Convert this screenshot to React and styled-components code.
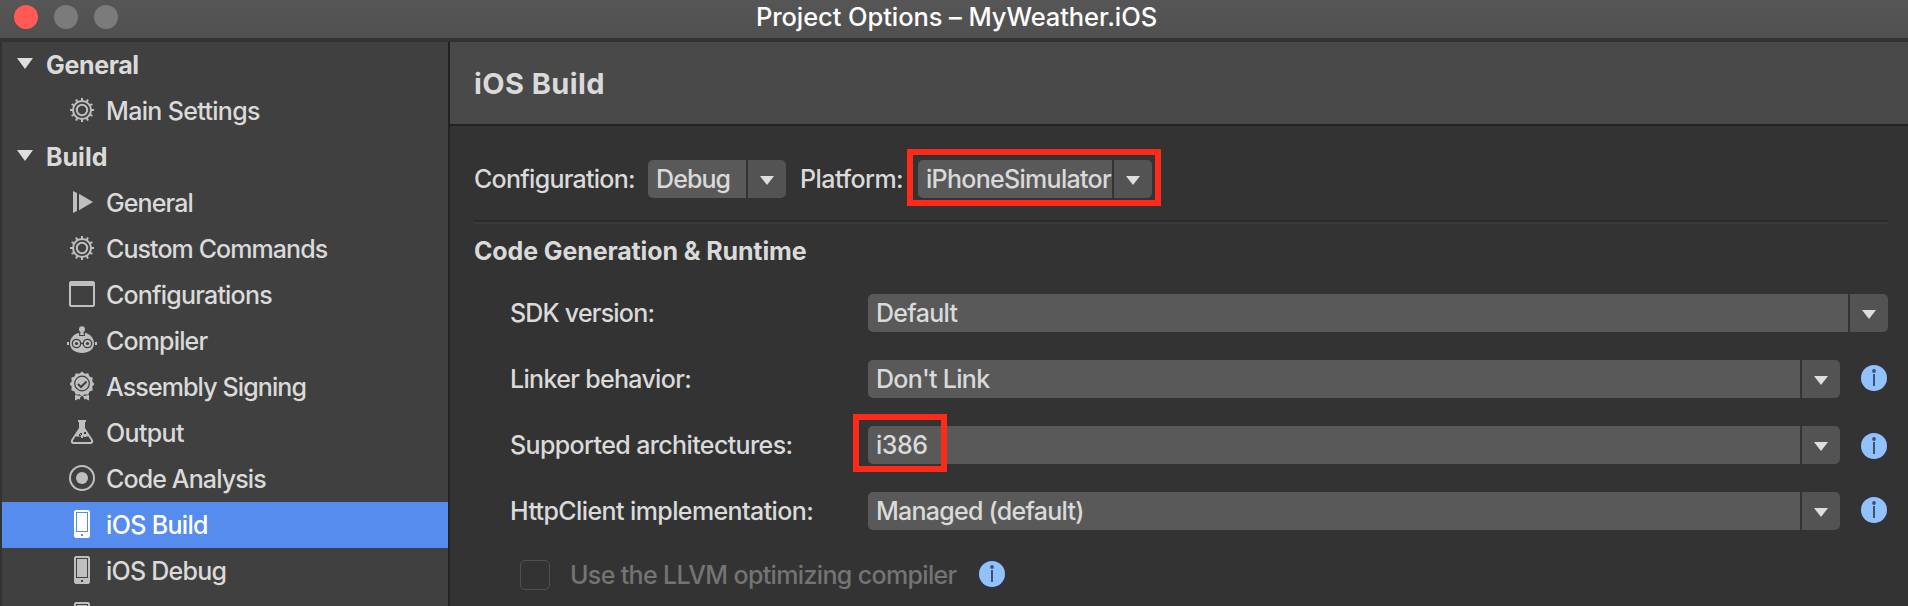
import React from "react";
import styled, { createGlobalStyle, css } from "styled-components";

const GlobalStyle = createGlobalStyle`
  * { box-sizing: border-box; }
  body {
    margin: 0;
    overflow: hidden;
    background: #333333;
    color: #dadada;
    font-family: Inter, "Liberation Sans", sans-serif;
    font-size: 25px;
    font-weight: 450;
  }
`;

const Window = styled.div`
  height: 606px;
  display: flex;
  flex-direction: column;
  overflow: hidden;
`;

const TitleBar = styled.header`
  flex: none;
  height: 42px;
  display: grid;
  grid-template-columns: 1fr auto 1fr;
  align-items: center;
  padding: 0 14px 6px;
  background: linear-gradient(#565656, #505050);
  border-bottom: 4px solid #323232;
`;

const Lights = styled.div`
  display: flex;
  gap: 16px;
`;

const Light = styled.span`
  width: 24px;
  height: 24px;
  border-radius: 50%;
  background: ${(p) => p.$color};
`;

const Title = styled.h1`
  margin: 0;
  font-size: 25.5px;
  font-weight: 450;
  line-height: 32px;
  letter-spacing: -0.08px;
  padding: 1px 0 0 5px;
  color: #ffffff;
`;

const Body = styled.div`
  flex: 1;
  min-height: 0;
  display: flex;
`;

const Sidebar = styled.nav`
  flex: none;
  width: 450px;
  overflow: hidden;
  background: #404040;
  border-left: 2px solid #333333;
  border-right: 2px solid #222222;
`;

const Group = styled.div`
  height: 46px;
  display: flex;
  align-items: center;
  gap: 13px;
  padding-left: 15px;
  font-weight: 700;
  letter-spacing: ${(p) => p.$tracking}px;

  svg { margin-bottom: 3px; }
`;

const Item = styled.div`
  height: 46px;
  display: flex;
  align-items: center;
  gap: 9px;
  padding-left: 65px;
  letter-spacing: ${(p) => p.$tracking}px;
  ${(p) => p.$selected && css`
    background: #568ced;
    color: #ffffff;
  `}

  svg {
    flex: none;
    margin-bottom: 2px;
    color: ${(p) => (p.$selected ? "#ffffff" : "#bfbfbf")};
  }
`;

const Panel = styled.main`
  flex: 1;
  min-width: 0;
  display: flex;
  flex-direction: column;
`;

const PanelHeader = styled.div`
  flex: none;
  height: 84px;
  display: flex;
  align-items: center;
  padding-left: 24px;
  background: #494949;
  border-bottom: 2px solid #222222;
  font-size: 29px;
  font-weight: 700;
  letter-spacing: 0.4px;
`;

const Content = styled.div`
  padding: 34px 20px 0 24px;
`;

const Toolbar = styled.div`
  height: 60px;
  display: flex;
  align-items: flex-start;
`;

const ToolLabel = styled.label`
  width: ${(p) => p.$width}px;
  margin-left: ${(p) => p.$left || 0}px;
  line-height: 38px;
  white-space: nowrap;
  letter-spacing: ${(p) => p.$tracking}px;
`;

const Divider = styled.div`
  height: 4px;
  background: #3a3a3a;
  border-top: 2px solid #2a2a2a;
`;

const SectionTitle = styled.h2`
  margin: 0;
  height: 70px;
  padding-top: 12px;
  font-size: 25px;
  line-height: 30px;
  font-weight: 700;
  letter-spacing: -0.12px;
`;

const Rows = styled.div`
  display: flex;
  flex-direction: column;
  gap: 28px;
`;

const Row = styled.div`
  height: 38px;
  display: flex;
  align-items: center;
  padding-left: 36px;
`;

const RowLabel = styled.label`
  flex: none;
  width: 358px;
  line-height: 38px;
  white-space: nowrap;
  letter-spacing: ${(p) => p.$tracking}px;
`;

const Select = styled.div`
  position: relative;
  height: 38px;
  display: flex;
  gap: 2px;
  ${(p) => (p.$width ? css`flex: none; width: ${p.$width}px;` : css`flex: 1;`)}
`;

const Field = styled.div`
  flex: 1;
  min-width: 0;
  padding-left: 8px;
  line-height: 38px;
  white-space: nowrap;
  border-radius: 5px 0 0 5px;
  background: #595959;
  letter-spacing: ${(p) => p.$tracking}px;
`;

const ArrowButton = styled.div`
  flex: none;
  width: 38px;
  display: flex;
  align-items: center;
  justify-content: center;
  padding-top: 3px;
  border-radius: 0 5px 5px 0;
  background: #535353;
`;

const Callout = styled.div`
  position: absolute;
  top: ${(p) => p.$top}px;
  left: ${(p) => p.$left}px;
  width: ${(p) => p.$width}px;
  height: ${(p) => p.$height}px;
  border: 6px solid #ff2a1a;
`;

const InfoSlot = styled.span`
  flex: none;
  display: flex;
  margin: 0 1px 0 21px;
  padding-top: ${(p) => Math.max(p.$shift, 0) * 2}px;
  padding-bottom: ${(p) => Math.max(-p.$shift, 0) * 2}px;
`;

const CheckRow = styled.div`
  height: 30px;
  display: flex;
  align-items: center;
  margin-top: 30px;
  padding-left: 46px;
  color: #747474;
`;

const CheckLabel = styled.span`
  width: 388px;
  white-space: nowrap;
  letter-spacing: -0.65px;
`;

const Checkbox = styled.span`
  width: 30px;
  height: 30px;
  margin-right: 20px;
  border: 1.5px solid #505050;
  border-radius: 5px;
`;

const Triangle = ({ w, h }) => (
  <svg width={w} height={h} viewBox="0 0 16 10" preserveAspectRatio="none">
    <path d="M0 0h16L8 10z" fill="#dedede" />
  </svg>
);

const Icon = ({ children }) => (
  <svg width="30" height="30" viewBox="0 0 30 30" fill="none" stroke="none">
    {children}
  </svg>
);

const range = (n) => Array.from({ length: n }, (_, i) => i);

const GearIcon = () => (
  <Icon>
    <g stroke="currentColor" strokeWidth="2">
      <circle cx="15" cy="15" r="9" />
      <circle cx="15" cy="15" r="5.2" />
      {range(12).map((i) => (
        <path key={i} d="M15 3v3" transform={`rotate(${i * 30} 15 15)`} />
      ))}
    </g>
  </Icon>
);

const RunIcon = () => (
  <Icon>
    <path d="M6 4l4 2v18l-4 2zM12 6.8L26 15l-14 8.2z" fill="currentColor" />
  </Icon>
);

const WindowIcon = () => (
  <Icon>
    <path
      fillRule="evenodd"
      fill="currentColor"
      d="M3.5 2h23L28 3.5v23L26.5 28h-23L2 26.5v-23zM4 7v19h22V7z"
    />
  </Icon>
);

const RobotIcon = () => (
  <Icon>
    <path d="M3 18.5C3 12 8.5 7.500 15 7.500S27 12 27 18.500c0 6-5.500 9.500-12 9.500S3 24.500 3 18.500z" fill="currentColor" />
    <path d="M12.7 7v3.500h4.600V7" stroke="#404040" strokeWidth="1.2" />
    <path d="M13.8 5h2.400v5h-2.400z" fill="currentColor" />
    <circle cx="15" cy="4.2" r="3" fill="currentColor" />
    <path d="M0 17h2v3H0zM28 17h2v3h-2z" fill="currentColor" />
    <g stroke="#404040" strokeWidth="1.3">
      <circle cx="9.5" cy="18.5" r="4.2" />
      <circle cx="20.5" cy="18.5" r="4.2" />
      <path d="M13.5 18.500h3" />
    </g>
    <circle cx="9.5" cy="18.5" r="1.6" fill="#404040" />
    <circle cx="20.5" cy="18.5" r="1.6" fill="#404040" />
  </Icon>
);

const sealPoints = range(24)
  .map((i) => {
    const r = i % 2 ? 10.6 : 12.4;
    const a = (i * Math.PI) / 12;
    return `${(15 + r * Math.sin(a)).toFixed(2)},${(13 - r * Math.cos(a)).toFixed(2)}`;
  })
  .join(" ");

const SealIcon = () => (
  <Icon>
    <polygon points={sealPoints} fill="currentColor" />
    <circle cx="15" cy="12.5" r="7.3" stroke="#404040" strokeWidth="1.2" />
    <path d="M11 13l3 3 5.500-5.500" stroke="#404040" strokeWidth="2" />
    <path d="M8 24l6 1-1.500 3.500L11 28l-3 1.500zM22 24l-6 1 1.500 3.500L19 28l3 1.500z" fill="currentColor" />
  </Icon>
);

const FlaskIcon = () => (
  <Icon>
    <path
      fill="currentColor"
      d="M11 3h8v2h-1v6l7.6 11.5c1.3 2.3.3 4.500-2.200 4.500H6.600c-2.500 0-3.500-2.200-2.200-4.500L12 11V5h-1z"
    />
    <path d="M8.5 19.500h13l2.500 4q.5 1.500-1 1.500H7q-1.500 0-1-1.500z" fill="#404040" />
    <path d="M13 16h2v2h-2zM17 15h2v2h-2zM12 19h2v-2h-2z" fill="#404040" />
    <path d="M14 19h2v2h-2zM17 18h2v2h-2z" fill="currentColor" />
  </Icon>
);

const TargetIcon = () => (
  <Icon>
    <circle cx="15" cy="15" r="12" stroke="currentColor" strokeWidth="2" />
    <circle cx="15" cy="15" r="6" fill="currentColor" />
  </Icon>
);

const PhoneIcon = () => (
  <Icon>
    <path
      fillRule="evenodd"
      fill="currentColor"
      d="M8.5 1h13L23 2.500v25L21.500 29h-13L7 27.500v-25zM9 3v20h12V3zM14 25v2h2v-2z"
    />
    <path d="M10 4h10v18H10z" fill="currentColor" />
  </Icon>
);

const InfoIcon = () => (
  <svg width="26" height="26" viewBox="0 0 26 26">
    <circle cx="13" cy="13" r="13" fill="#92c1ff" />
    <circle cx="13" cy="6" r="1.9" fill="#3d5270" />
    <path d="M12 9h2v12h-2z" fill="#3d5270" />
  </svg>
);

const buildItems = [
  ["General", RunIcon, -0.9],
  ["Custom Commands", GearIcon, -0.92],
  ["Configurations", WindowIcon, -0.8],
  ["Compiler", RobotIcon, -0.85],
  ["Assembly Signing", SealIcon, -0.88],
  ["Output", FlaskIcon, -0.65],
  ["Code Analysis", TargetIcon, -0.88],
  ["iOS Build", PhoneIcon, -0.66],
  ["iOS Debug", PhoneIcon, -0.76],
];

const NavItem = ({ item: [label, Glyph, tracking], selected }) => (
  <Item $tracking={tracking} $selected={selected}>
    <Glyph />
    {label}
  </Item>
);

const ComboBox = ({ value, width, tracking = -0.7, children }) => (
  <Select $width={width}>
    <Field $tracking={tracking}>{value}</Field>
    <ArrowButton>
      <Triangle w={14} h={9} />
    </ArrowButton>
    {children}
  </Select>
);

export default function App() {
  return (
    <Window>
      <GlobalStyle />
      <TitleBar>
        <Lights>
          <Light $color="#ff5a55" />
          <Light $color="#7b7b7b" />
          <Light $color="#7b7b7b" />
        </Lights>
        <Title>Project Options – MyWeather.iOS</Title>
      </TitleBar>
      <Body>
        <Sidebar>
          <Group $tracking={-0.35}><Triangle w={16} h={11} />General</Group>
          <NavItem item={["Main Settings", GearIcon, -0.66]} />
          <Group $tracking={0}><Triangle w={16} h={11} />Build</Group>
          {buildItems.map((item) => (
            <NavItem key={item[0]} item={item} selected={item[0] === "iOS Build"} />
          ))}
          <Item>
            <PhoneIcon />
          </Item>
        </Sidebar>
        <Panel>
          <PanelHeader>iOS Build</PanelHeader>
          <Content>
            <Toolbar>
              <ToolLabel $width={174} $tracking={-0.74}>Configuration:</ToolLabel>
              <ComboBox value="Debug" width={138} tracking={-0.9} />
              <ToolLabel $width={118} $left={14} $tracking={-0.55}>Platform:</ToolLabel>
              <ComboBox value="iPhoneSimulator" width={234}>
                <Callout $top={-11} $left={-11} $width={254} $height={57} />
              </ComboBox>
            </Toolbar>
            <Divider />
            <SectionTitle>Code Generation &amp; Runtime</SectionTitle>
            <Rows>
              <Row>
                <RowLabel $tracking={-0.8}>SDK version:</RowLabel>
                <ComboBox value="Default" />
              </Row>
              <Row>
                <RowLabel $tracking={-0.68}>Linker behavior:</RowLabel>
                <ComboBox value="Don't Link" tracking={-0.7} />
                <InfoSlot $shift={-1}><InfoIcon /></InfoSlot>
              </Row>
              <Row>
                <RowLabel $tracking={-0.62}>Supported architectures:</RowLabel>
                <ComboBox value="i386" tracking={-0.5}>
                  <Callout $top={-12} $left={-15} $width={94} $height={58} />
                </ComboBox>
                <InfoSlot $shift={1}><InfoIcon /></InfoSlot>
              </Row>
              <Row>
                <RowLabel $tracking={-0.6}>HttpClient implementation:</RowLabel>
                <ComboBox value="Managed (default)" tracking={-0.74} />
                <InfoSlot $shift={-1}><InfoIcon /></InfoSlot>
              </Row>
            </Rows>
            <CheckRow>
              <Checkbox />
              <CheckLabel>Use the LLVM optimizing compiler</CheckLabel>
              <InfoSlot $shift={-1}><InfoIcon /></InfoSlot>
            </CheckRow>
          </Content>
        </Panel>
      </Body>
    </Window>
  );
}
